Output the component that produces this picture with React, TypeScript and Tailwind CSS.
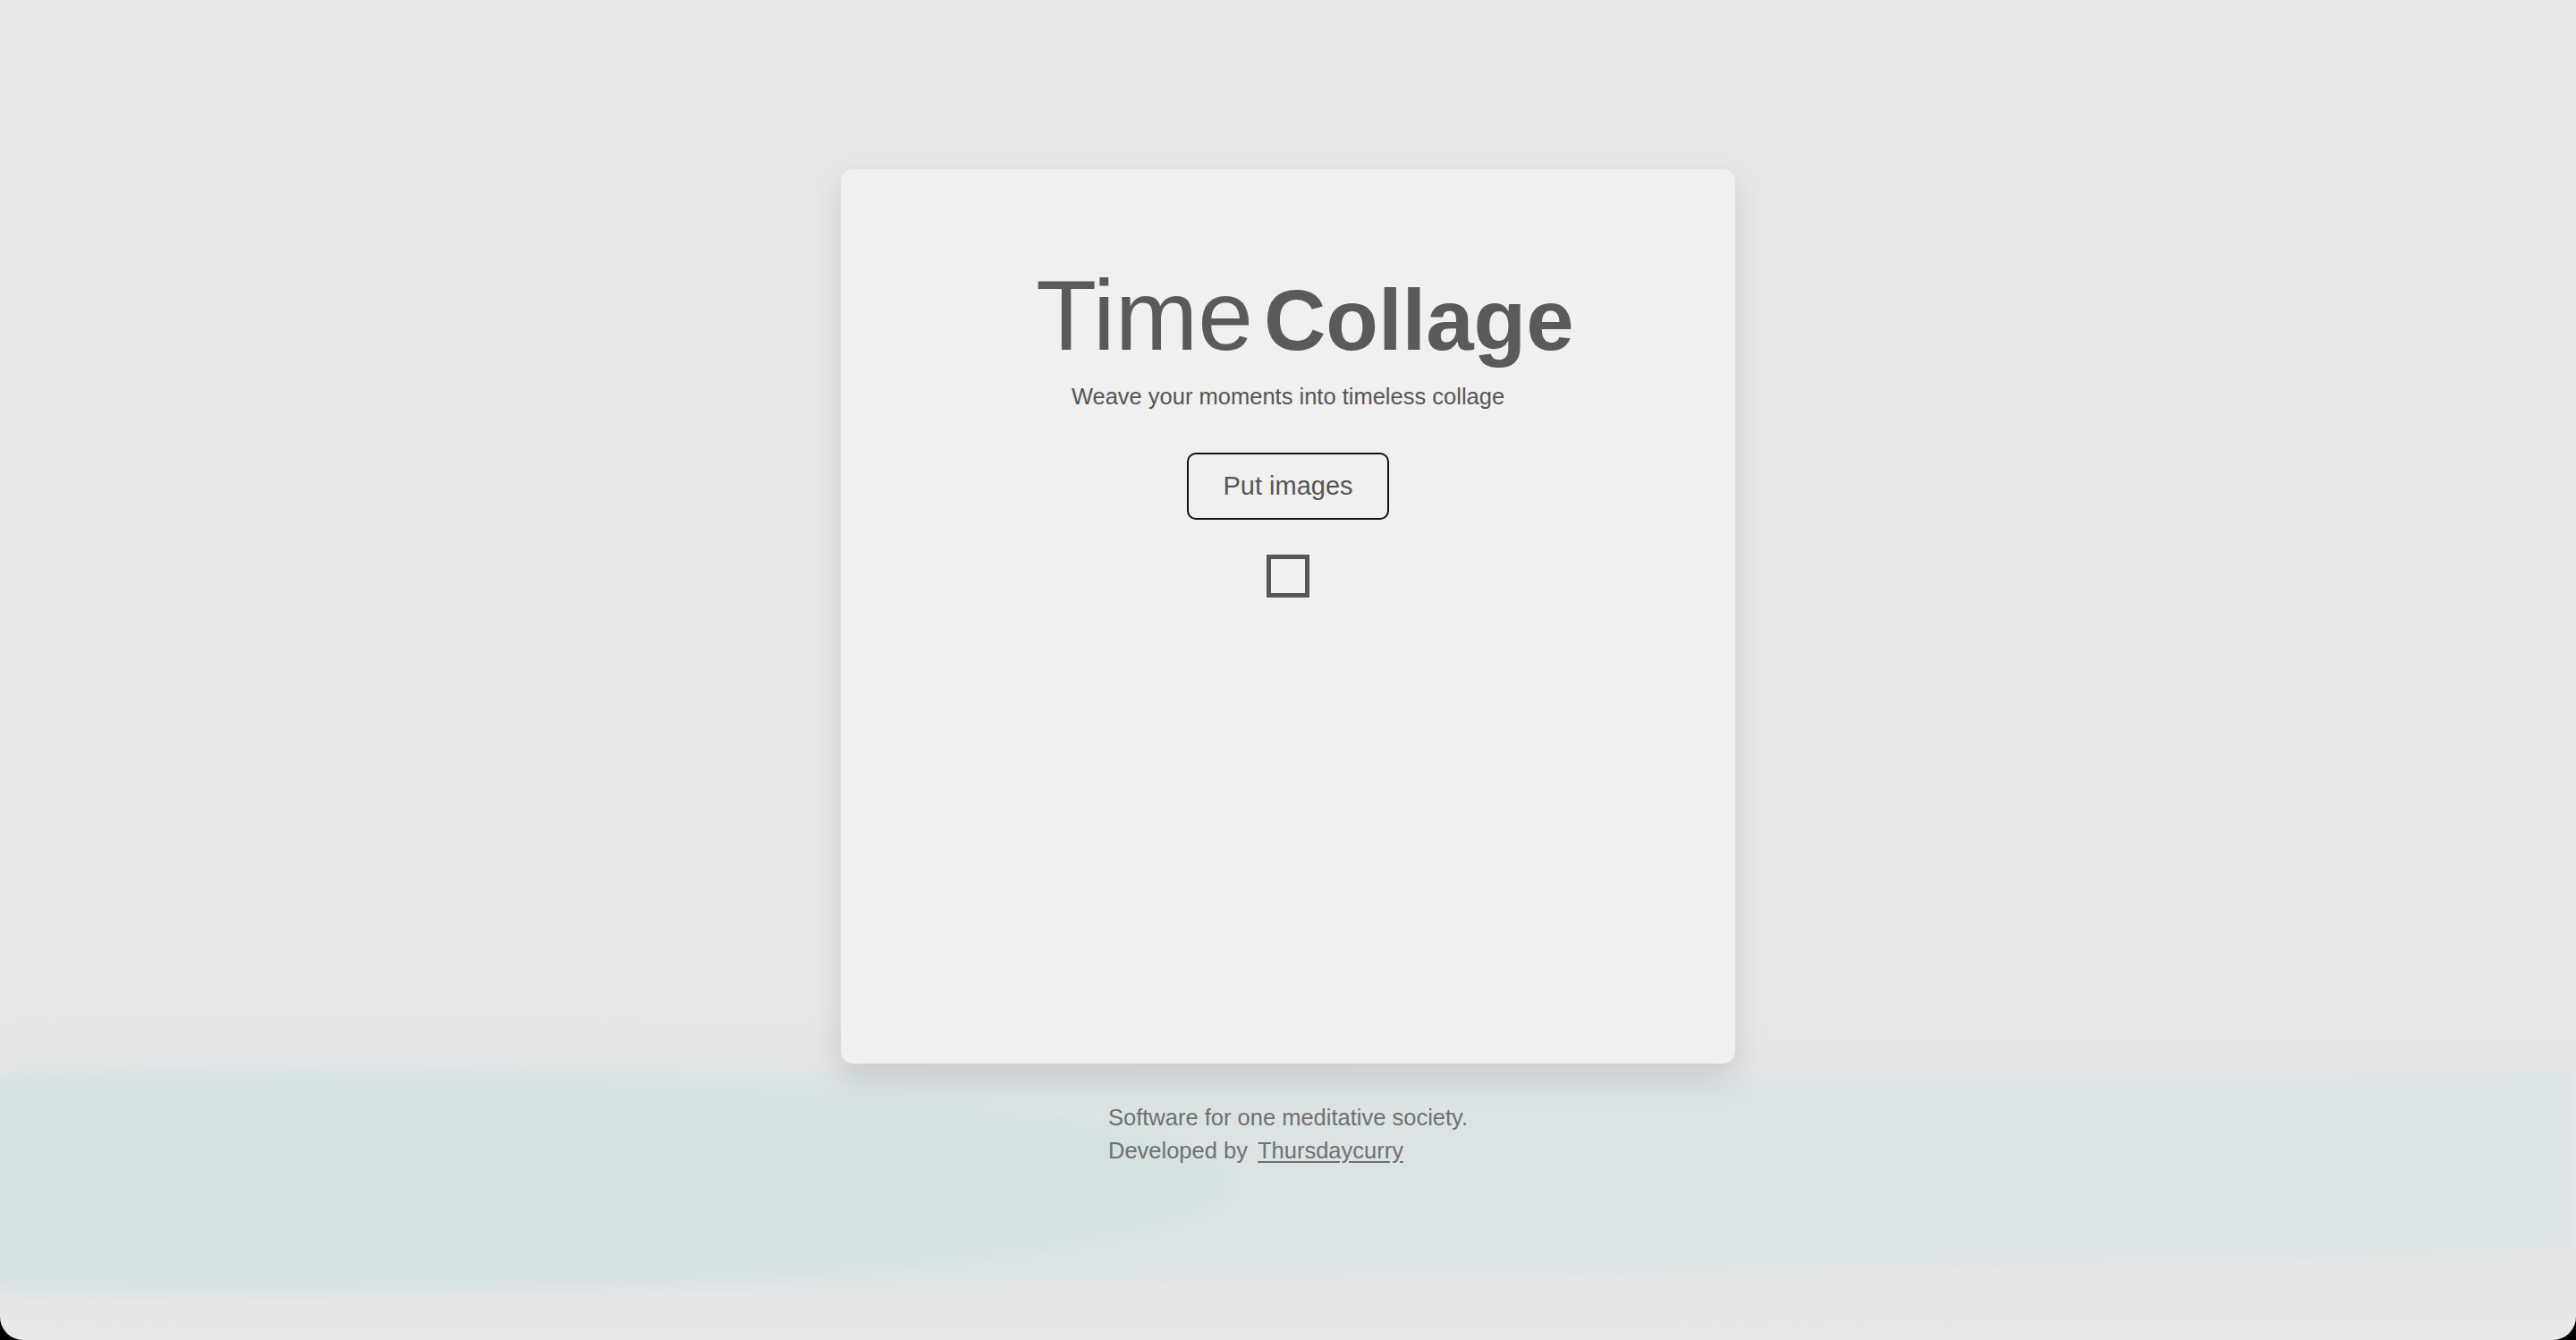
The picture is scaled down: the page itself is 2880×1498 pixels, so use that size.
import React from 'react'

function Waves() {
  return (
    <svg
      className="absolute left-0 bottom-0 w-full h-[420px] pointer-events-none"
      viewBox="0 0 2880 420"
      preserveAspectRatio="none"
    >
      <defs>
        <filter id="soft" x="-10%" y="-30%" width="120%" height="160%">
          <feGaussianBlur stdDeviation="9" />
        </filter>
      </defs>
      <g filter="url(#soft)">
        {/* faint outer band */}
        <path d="M0,70 C900,55 1900,110 2880,88 L2880,390 C1900,396 900,402 0,394 Z" fill="#e4e5e6" />
        {/* main teal band */}
        <path d="M0,118 C800,100 1800,150 2880,118 L2880,318 C2000,340 1000,362 0,370 Z" fill="#dce3e5" />
        {/* darker teal pool on the left */}
        <ellipse cx="320" cy="244" rx="1060" ry="122" fill="#d4e1e2" />
      </g>
    </svg>
  )
}

export default function App() {
  return (
    <div className="h-screen bg-black font-['Liberation_Sans',Arial,sans-serif]">
      <div className="relative h-full overflow-hidden rounded-b-[26px] bg-[#e9e7e8]">
        <Waves />

        <div className="relative z-10 flex flex-col items-center pt-[189px]">
          {/* Card */}
          <div className="flex h-[1000px] w-[1000px] flex-col items-center rounded-[14px] bg-[#f1eff0] pt-[109px] shadow-[0_14px_38px_rgba(0,0,0,0.13)]">
            <h1 className="ml-[38px] flex items-baseline gap-[12px] text-[#5a5a5a]">
              <span className="text-[111px] font-normal leading-none">Time</span>
              <span className="text-[96px] font-bold leading-none">Collage</span>
            </h1>
            <p className="mt-[22px] text-[25.5px] leading-none text-[#555555]">
              Weave your moments into timeless collage
            </p>
            <button className="mt-[49px] flex h-[75px] w-[226px] items-center justify-center rounded-[10px] border-2 border-[#111111] text-[29px] leading-none text-[#555555]">
              Put images
            </button>
            <div className="mt-[39px] h-[48px] w-[48px] border-[5px] border-[#555555]" />
          </div>

          {/* Footer */}
          <div className="mt-[42px] text-[25.5px] leading-[37px] text-[#6e7072]">
            <div>Software for one meditative society.</div>
            <div>
              Developed by <a className="ml-[4px] underline underline-offset-[3px]">Thursdaycurry</a>
            </div>
          </div>
        </div>
      </div>
    </div>
  )
}
